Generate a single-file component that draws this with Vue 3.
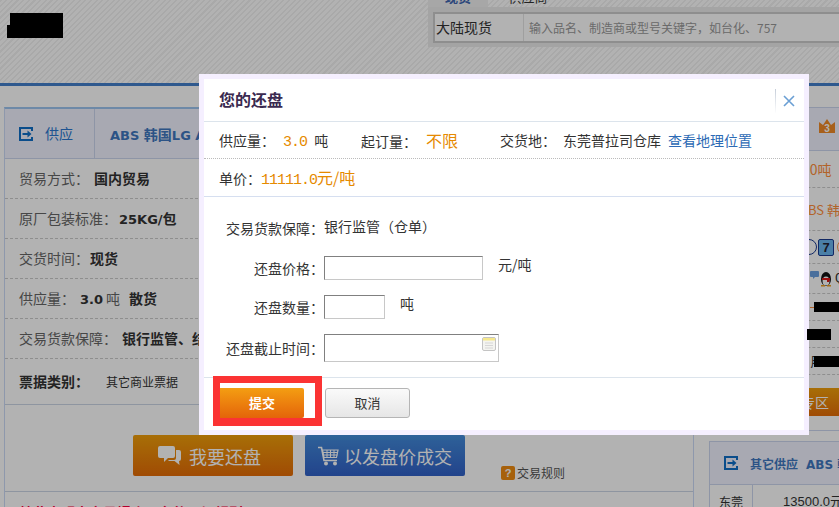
<script setup>
const leftRows = [
  { label: '贸易方式：', value: '国内贸易', gap: 5 },
  { label: '原厂包装标准：', value: '25KG/', suffix: '包', gap: 2, latin: true },
  { label: '交货时间：', value: '现货', gap: 1 },
  { label: '供应量：', value: '3.0', unit: '吨', extra: '散货', gap: 5, latin: true },
  { label: '交易货款保障：', value: '银行监管、结算', gap: 5 },
]

const formRows = [
  { label: '还盘价格：', cls: 'price', unit: '元/吨' },
  { label: '还盘数量：', cls: 'qty', unit: '吨' },
  { label: '还盘截止时间：', cls: 'date', unit: '' },
]
</script>

<template>
  <div class="page">
    <!-- page behind the overlay -->
    <header class="top">
      <div class="redact logo"></div>
      <div class="search">
        <div class="tabs"><span class="tab on">现货</span><span class="tab">供应商</span></div>
        <div class="search-bar">
          <div class="search-box">
            <span class="scope">大陆现货</span>
            <span class="hint">输入品名、制造商或型号关键字，如台化、757</span>
          </div>
        </div>
      </div>
    </header>

    <main class="content">
      <section class="left">
        <div class="panel-head">
          <svg class="go" viewBox="0 0 14 14"><path d="M13 4V1H1v12h12v-3" fill="none" stroke="#0f6fc8" stroke-width="2"/><path d="M3.500 6h5V3.500L12.500 7l-4 3.500V8h-5z" fill="#0f6fc8"/></svg>
          <span class="head-tab">供应</span>
          <b class="head-title lat">ABS <span class="cjk">韩国</span>LG ABS</b>
        </div>
        <div v-for="r in leftRows" :key="r.label" class="info-row">
          <span>{{ r.label }}</span><b :class="{ lat: r.latin }" :style="{ marginLeft: r.gap + 'px' }">{{ r.value }}<span v-if="r.suffix" class="cjk">{{ r.suffix }}</span></b><span v-if="r.unit" class="unit-l">{{ r.unit }}</span><b v-if="r.extra" class="extra">{{ r.extra }}</b>
        </div>
        <div class="info-row last">
          <b>票据类别：</b><span class="bill">其它商业票据</span>
        </div>
        <div class="actions">
          <div class="big-btn orange">
            <svg viewBox="0 0 23 20" width="23" height="20"><path d="M18 4h3a2 2 0 0 1 2 2v7a2 2 0 0 1-2 2v0l.5 4-5-4H11l-1-1h6a2 2 0 0 0 2-2z" fill="#fff"/><path d="M2 0h13a2 2 0 0 1 2 2v8a2 2 0 0 1-2 2H10l-4 4v-4H2a2 2 0 0 1-2-2V2a2 2 0 0 1 2-2z" fill="#fff"/></svg>
            <span>我要还盘</span>
          </div>
          <div class="big-btn blue">
            <svg viewBox="0 0 21 20" width="21" height="20" fill="none" stroke="#fff"><path d="M0 1.500h3.500L6 14.500h13" stroke-width="1.600"/><path d="M4.500 4h15.500l-1.500 7.500H6z" stroke-width="1.200"/><path d="M4.500 6.500h15M5 9h14.500M9 4v7.500M12.500 4v7.500M16 4v7.500"/><circle cx="8" cy="17.500" r="2" fill="#fff" stroke="none"/><circle cx="17" cy="17.500" r="2" fill="#fff" stroke="none"/></svg>
            <span>以发盘价成交</span>
          </div>
          <div class="rules"><i>?</i>交易规则</div>
        </div>
        <div class="notice">特此声明本交易撮合平台的一切规则</div>
      </section>

      <aside class="right">
        <div class="side-top">
          <div class="side-head">
            <svg class="crown" viewBox="0 0 18 16" width="18" height="16"><path d="M1 15V4l4 3 4-6 4 6 4-3v11z" fill="#f08a28"/><text x="9" y="14" text-anchor="middle" class="crown-num">3</text></svg>
          </div>
          <div class="side-row r1 orange-text">10吨</div>
          <div class="side-row r2 orange-text">ABS 韩国</div>
          <div class="side-row r3">
            <span class="ring"></span><span class="seven">7</span><span class="ring small"></span>
          </div>
          <div class="side-row r4">
            <svg class="qq" viewBox="0 0 24 17" width="24" height="17">
              <path d="M1 1h7a1 1 0 0 1 1 1v4a1 1 0 0 1-1 1H5L3 9V7H1a1 1 0 0 1-1-1V2a1 1 0 0 1 1-1z" fill="#6aa0e0"/>
              <ellipse cx="16" cy="9" rx="5" ry="7" fill="#111"/>
              <ellipse cx="16" cy="11" rx="3.500" ry="4.500" fill="#fff"/>
              <path d="M12 8h8v2l-1 2h-2v-2h-5z" fill="#e01818"/>
              <path d="M11 15h4v1.500h-4zM17 15h4v1.500h-4z" fill="#f0a020"/>
            </svg>
            <span class="q">Q</span>
          </div>
          <div class="side-row r5"><span class="dash"></span><span class="redact b5"></span></div>
          <div class="side-row r6"></div>
          <div class="side-row r7"><span class="han">用</span><span class="redact b7"></span></div>
          <div class="zone">专区</div>
        </div>
        <div class="side-box">
          <div class="side-box-head">
            <svg class="go" viewBox="0 0 14 14"><path d="M13 4V1H1v12h12v-3" fill="none" stroke="#0f6fc8" stroke-width="2"/><path d="M3.500 6h5V3.500L12.500 7l-4 3.500V8h-5z" fill="#0f6fc8"/></svg>
            <b class="other">其它供应</b><b class="abs lat">ABS <span class="cjk">韩国</span></b>
          </div>
          <div class="side-box-row"><span class="city">东莞</span><span class="amt">13500.0元</span></div>
        </div>
      </aside>
    </main>

    <div class="overlay"></div>

    <!-- counter offer dialog -->
    <div class="dialog">
      <div class="dialog-inner">
        <div class="dlg-title">
          <h2>您的还盘</h2>
          <span class="close">
            <svg viewBox="0 0 12 12" width="12" height="12"><path d="M1 1l10 10M11 1L1 11" stroke="#6a9fd4" stroke-width="1.600"/></svg>
          </span>
        </div>
        <div class="dlg-line">
          <span class="f1">供应量：<em class="num">3.0</em> <span class="ton">吨</span></span>
          <span class="f2">起订量：<em class="any">不限</em></span>
          <span class="f3">交货地：<span class="place">东莞普拉司仓库</span><a>查看地理位置</a></span>
        </div>
        <div class="dlg-price">单价：<em><span class="digits">11111.0</span>元/吨</em></div>
        <div class="dlg-form">
          <div class="form-row guarantee">
            <label>交易货款保障：</label><span class="guarantee-val">银行监管（仓单）</span>
          </div>
          <div v-for="f in formRows" :key="f.label" class="form-row">
            <label>{{ f.label }}</label>
            <span class="input" :class="f.cls">
              <svg v-if="f.cls === 'date'" class="cal" viewBox="0 0 14 14" width="14" height="14"><rect x="0.500" y="0.500" width="13" height="13" rx="1.500" fill="#f4f4f0" stroke="#c4c4c4"/><rect x="1" y="1" width="12" height="2.500" fill="#f6e88c"/><path d="M3 6h8M3 8.500h8M3 11h8" stroke="#d6d6d6"/></svg>
            </span>
            <span v-if="f.unit" class="unit">{{ f.unit }}</span>
          </div>
        </div>
        <div class="dlg-foot">
          <div class="submit-mark"><span class="submit">提交</span></div>
          <span class="cancel">取消</span>
        </div>
      </div>
    </div>

    <!-- black-out that sits on the dialog edge -->
    <div class="redact over"></div>
  </div>
</template>

<style>
html, body { margin: 0; background: #b3b3b3; overflow: hidden; }
</style>

<style scoped>
.page {
  position: relative;
  width: 839px;
  height: 507px;
  overflow: hidden;
  background: #fff;
  font-family: "Noto Sans CJK SC", "Liberation Sans", sans-serif;
  font-size: 14px;
  color: #333;
}

em { font-style: normal; }

.lat { font-family: "DejaVu Sans", "Noto Sans CJK SC", sans-serif; font-size: 13px; }
.cjk { font-family: "Noto Sans CJK SC", sans-serif; font-size: 14px; }

.overlay {
  position: absolute;
  inset: 0;
  background: rgba(0, 0, 0, 0.3);
}

.redact { display: block; background: #000; }

.top {
  height: 86px;
  box-sizing: border-box;
  display: flex;
  justify-content: space-between;
  border-bottom: 3px solid #4480cc;
  background: repeating-linear-gradient(135deg, #f3f3f3 0 1.500px, #fff 1.500px 4px);
}

.logo {
  width: 56px;
  height: 25px;
  margin: 13px 0 0 7px;
  clip-path: polygon(3px 0, 100% 0, 100% 100%, 0 100%, 0 12px, 3px 12px);
}

.search { width: 411px; height: 47px; }
.tabs { height: 7px; overflow: hidden; display: flex; font-size: 13px; line-height: 1; }
.tab { width: 60px; height: 20px; text-align: center; margin-top: -10px; }
.tab.on { background: #f0f0f0; color: #3f66b0; font-weight: 700; }
.tab:last-child { margin-left: 10px; }
.search-bar { height: 40px; box-sizing: border-box; padding: 5px 0 0 5px; background: #ebebeb; }
.search-box {
  display: flex;
  align-items: center;
  height: 31px;
  box-sizing: border-box;
  border: 2px solid #ccc;
  border-right: 0;
  background: #fff;
}
.scope {
  width: 89px;
  flex: none;
  box-sizing: border-box;
  padding-left: 1px;
  border-right: 1px solid #e4e4e4;
  line-height: 27px;
  font-size: 14px;
}
.hint { padding-left: 5px; color: #999; font-size: 12px; white-space: nowrap; }

.content {
  display: flex;
  gap: 15px;
  padding: 21px 0 0 4px;
}

.left {
  width: 690px;
  flex: none;
  height: 410px;
  box-sizing: border-box;
  border-top: 2px solid #9dc5f0;
  border-left: 1px solid #ccdaf7;
  border-right: 1px solid #ccdaf7;
}

.panel-head {
  display: flex;
  align-items: center;
  height: 50px;
  box-sizing: border-box;
  background: #f1f3ff;
  border-bottom: 1px solid #ccd6ee;
}
.go { width: 14px; height: 14px; flex: none; }
.panel-head .go { margin-left: 14px; }
.head-tab {
  width: 50px;
  flex: none;
  box-sizing: border-box;
  margin-left: 12px;
  line-height: 49px;
  color: #2b78d0;
  border-right: 1px solid #ccd6ee;
}
.head-title { margin-left: 15px; color: #3f78c0; white-space: nowrap; }

.info-row {
  height: 40px;
  box-sizing: border-box;
  padding-left: 14px;
  line-height: 39px;
  border-bottom: 1px dashed #ccc;
  color: #666;
  white-space: nowrap;
}
.info-row b { color: #333; }
.unit-l { margin-left: 3px; }
.info-row .extra { margin-left: 9px; }
.info-row.last { height: 46px; line-height: 45px; border-bottom: 1px solid #ccd6e6; }
.bill { margin-left: 17px; color: #333; font-size: 12px; }

.actions {
  display: flex;
  height: 87px;
  box-sizing: border-box;
  padding: 30px 0 10px 128px;
  border-bottom: 1px solid #ccd6e6;
}
.big-btn {
  width: 160px;
  height: 41px;
  flex: none;
  display: flex;
  align-items: center;
  box-sizing: border-box;
  border-radius: 2px;
  color: #fff;
  font-size: 18px;
}
.big-btn.orange {
  gap: 8px;
  padding-left: 25px;
  background: linear-gradient(#f09f0b, #e56c07);
}
.big-btn.blue {
  gap: 5px;
  margin-left: 12px;
  padding-left: 13px;
  background: linear-gradient(#438cdb, #3161c8);
}
.rules {
  align-self: flex-end;
  display: flex;
  align-items: center;
  gap: 2px;
  margin-left: 36px;
  font-size: 12px;
  color: #555;
}
.rules i {
  width: 14px;
  height: 14px;
  background: #f08c10;
  border-radius: 2px;
  color: #fff;
  font: 700 11px/14px "Liberation Sans", sans-serif;
  text-align: center;
}
.notice { margin: 12px 0 0 14px; color: #ff0040; font-weight: 700; line-height: 16px; white-space: nowrap; }

.right { width: 131px; flex: none; display: flex; flex-direction: column; }
.side-top {
  height: 324px;
  box-sizing: border-box;
  border-top: 1px solid #ccd6ee;
  border-bottom: 1px solid #ccd6ee;
}
.side-head {
  height: 43px;
  box-sizing: border-box;
  display: flex;
  align-items: center;
  justify-content: flex-end;
  padding: 0 4px 6px 0;
  background: #f1f3ff;
  border-bottom: 1px solid #ccd6ee;
}
.crown-num { fill: #fff; font: 700 10px "Liberation Sans", sans-serif; }
.side-row {
  display: flex;
  align-items: center;
  box-sizing: border-box;
  border-bottom: 1px dashed #ccc;
  overflow: hidden;
  white-space: nowrap;
  font-size: 13px;
  line-height: 1;
}
.orange-text { color: #ff8f3c; }
.r1 { height: 37px; padding-left: 93px; font-size: 14px; }
.r2 { height: 43px; padding-left: 91px; }
.r3 { height: 33px; padding-left: 92px; gap: 1px; }
.r4 { height: 30px; padding-left: 101px; }
.r5 { height: 27px; padding-left: 101px; }
.r6 { height: 27px; }
.r7 { height: 27px; padding-left: 101px; }
.ring { width: 16px; height: 16px; flex: none; box-sizing: border-box; border: 1px solid #1a3a90; border-radius: 50%; }
.ring.small { margin-left: 2px; border-color: #ff9a50; }
.seven {
  width: 16px;
  height: 17px;
  flex: none;
  box-sizing: border-box;
  border: 1px solid #1a3a90;
  border-radius: 2px;
  background: #6ab6f0;
  color: #223;
  font: 700 13px/15px "Liberation Sans", sans-serif;
  text-align: center;
}
.qq { flex: none; }
.q { margin-left: 1px; font-family: "Liberation Mono", monospace; }
.dash { width: 4px; height: 1px; flex: none; background: #ff8f3c; }
.b5 { width: 26px; height: 10px; flex: none; }
.han { width: 4px; flex: none; overflow: hidden; font-size: 14px; }
.b7 { width: 26px; height: 11px; flex: none; }
.zone {
  height: 28px;
  margin-top: 13px;
  box-sizing: border-box;
  padding-left: 92px;
  background: linear-gradient(#f09f0b, #e56c07);
  color: #fff;
  font-size: 14px;
  line-height: 28px;
}
.side-box {
  margin-top: 10px;
  border: 1px solid #ccd6ee;
  border-right: 0;
}
.side-box-head {
  display: flex;
  align-items: center;
  height: 42px;
  padding-left: 14px;
  background: #f1f3ff;
  border-bottom: 1px solid #ccd6ee;
  color: #3f78c0;
  white-space: nowrap;
  overflow: hidden;
  font-size: 12px;
}
.other { margin-left: 12px; }
.side-box-head .abs { margin-left: 8px; font-size: 12px; }
.side-box-head .cjk { font-size: 12px; }
.side-box-row { display: flex; height: 30px; font-size: 13px; line-height: 34px; white-space: nowrap; overflow: hidden; }
.city { width: 43px; flex: none; box-sizing: border-box; padding-left: 9px; font-size: 12px; border-right: 1px solid #ccd6ee; }
.amt { margin-left: 30px; font-family: "Liberation Sans", "Noto Sans CJK SC", sans-serif; }

.dialog {
  position: absolute;
  left: 199px;
  top: 74px;
  width: 610px;
  height: 361px;
  box-sizing: border-box;
  padding: 5px;
  background: #f5efff;
}
.dialog-inner { height: 100%; background: #fff; display: flex; flex-direction: column; }

.dlg-title {
  display: flex;
  justify-content: space-between;
  align-items: center;
  height: 43px;
  flex: none;
  box-sizing: border-box;
  border-bottom: 1px solid #dce4ec;
  padding-left: 15px;
}
.dlg-title h2 { margin: 0 0 2px; font-size: 16px; font-weight: 700; color: #3a2a50; }
.close {
  display: flex;
  align-items: center;
  height: 24px;
  margin-top: 2px;
  padding: 0 9px 0 7px;
  border-left: 1px solid;
  border-image: linear-gradient(#c4ccd8, #fff) 1;
}

.dlg-line {
  display: flex;
  align-items: center;
  height: 37px;
  flex: none;
  box-sizing: border-box;
  padding-left: 15px;
  border-bottom: 1px dotted #bbb;
  white-space: nowrap;
}
.f1 { width: 142px; flex: none; }
.f2 { width: 139px; flex: none; }
.f3 { flex: none; }
.num { margin-left: 8px; color: #e68a00; font: 15px "Liberation Mono", monospace; letter-spacing: -1px; }
.ton { margin-left: 4px; }
.any { margin-left: 9px; color: #e68a00; font-size: 16px; }
.place { margin-left: 7px; }
.f3 a { margin-left: 7px; color: #2e6bb5; }

.dlg-price {
  height: 38px;
  flex: none;
  box-sizing: border-box;
  padding-left: 15px;
  line-height: 36px;
  border-bottom: 1px solid #d6dff0;
  white-space: nowrap;
}
.dlg-price em { color: #e68a00; font-size: 16px; }
.digits { font: 15px "Liberation Mono", monospace; letter-spacing: -1px; }

.dlg-form { flex: 1; padding-top: 21px; display: flex; flex-direction: column; gap: 15px; line-height: 20px; }
.form-row { display: flex; align-items: center; }
.form-row label { width: 120px; flex: none; text-align: right; white-space: nowrap; }
.guarantee { height: 20px; margin-bottom: 3px; }
.guarantee-val { margin-bottom: 4px; }
.input {
  position: relative;
  display: block;
  height: 24px;
  box-sizing: border-box;
  border: 1px solid #c8c8c8;
  border-top-color: #808080;
  border-left-color: #808080;
  background: #fff;
}
.price { width: 159px; }
.qty { width: 61px; }
.date { width: 175px; height: 28px; }
.unit { margin: 0 0 8px 15px; line-height: 16px; }
.cal { position: absolute; top: 2px; right: 2px; }

.dlg-foot {
  height: 53px;
  flex: none;
  box-sizing: border-box;
  border-top: 1px solid #dce4ec;
  display: flex;
  align-items: flex-start;
  padding-left: 9px;
}
.submit-mark {
  width: 109px;
  height: 50px;
  margin-top: -2px;
  box-sizing: border-box;
  border: 7px solid #fb3333;
  border-bottom-width: 8px;
  padding-top: 5px;
  flex: none;
  background: #fff;
}
.submit {
  display: block;
  width: 84px;
  height: 30px;
  border-radius: 0 2px 2px 0;
  background: linear-gradient(#f49e12, #e4640a);
  color: #fff;
  font-size: 13px;
  font-weight: 700;
  line-height: 30px;
  text-align: center;
}
.cancel {
  width: 85px;
  height: 30px;
  margin: 10px 0 0 3px;
  box-sizing: border-box;
  border: 1px solid #b5b5b5;
  border-radius: 3px;
  background: linear-gradient(#fafafa, #e6e6e6);
  text-align: center;
  font-size: 13px;
  line-height: 28px;
}

.over {
  position: absolute;
  left: 807px;
  top: 329px;
  width: 24px;
  height: 11px;
}
</style>
